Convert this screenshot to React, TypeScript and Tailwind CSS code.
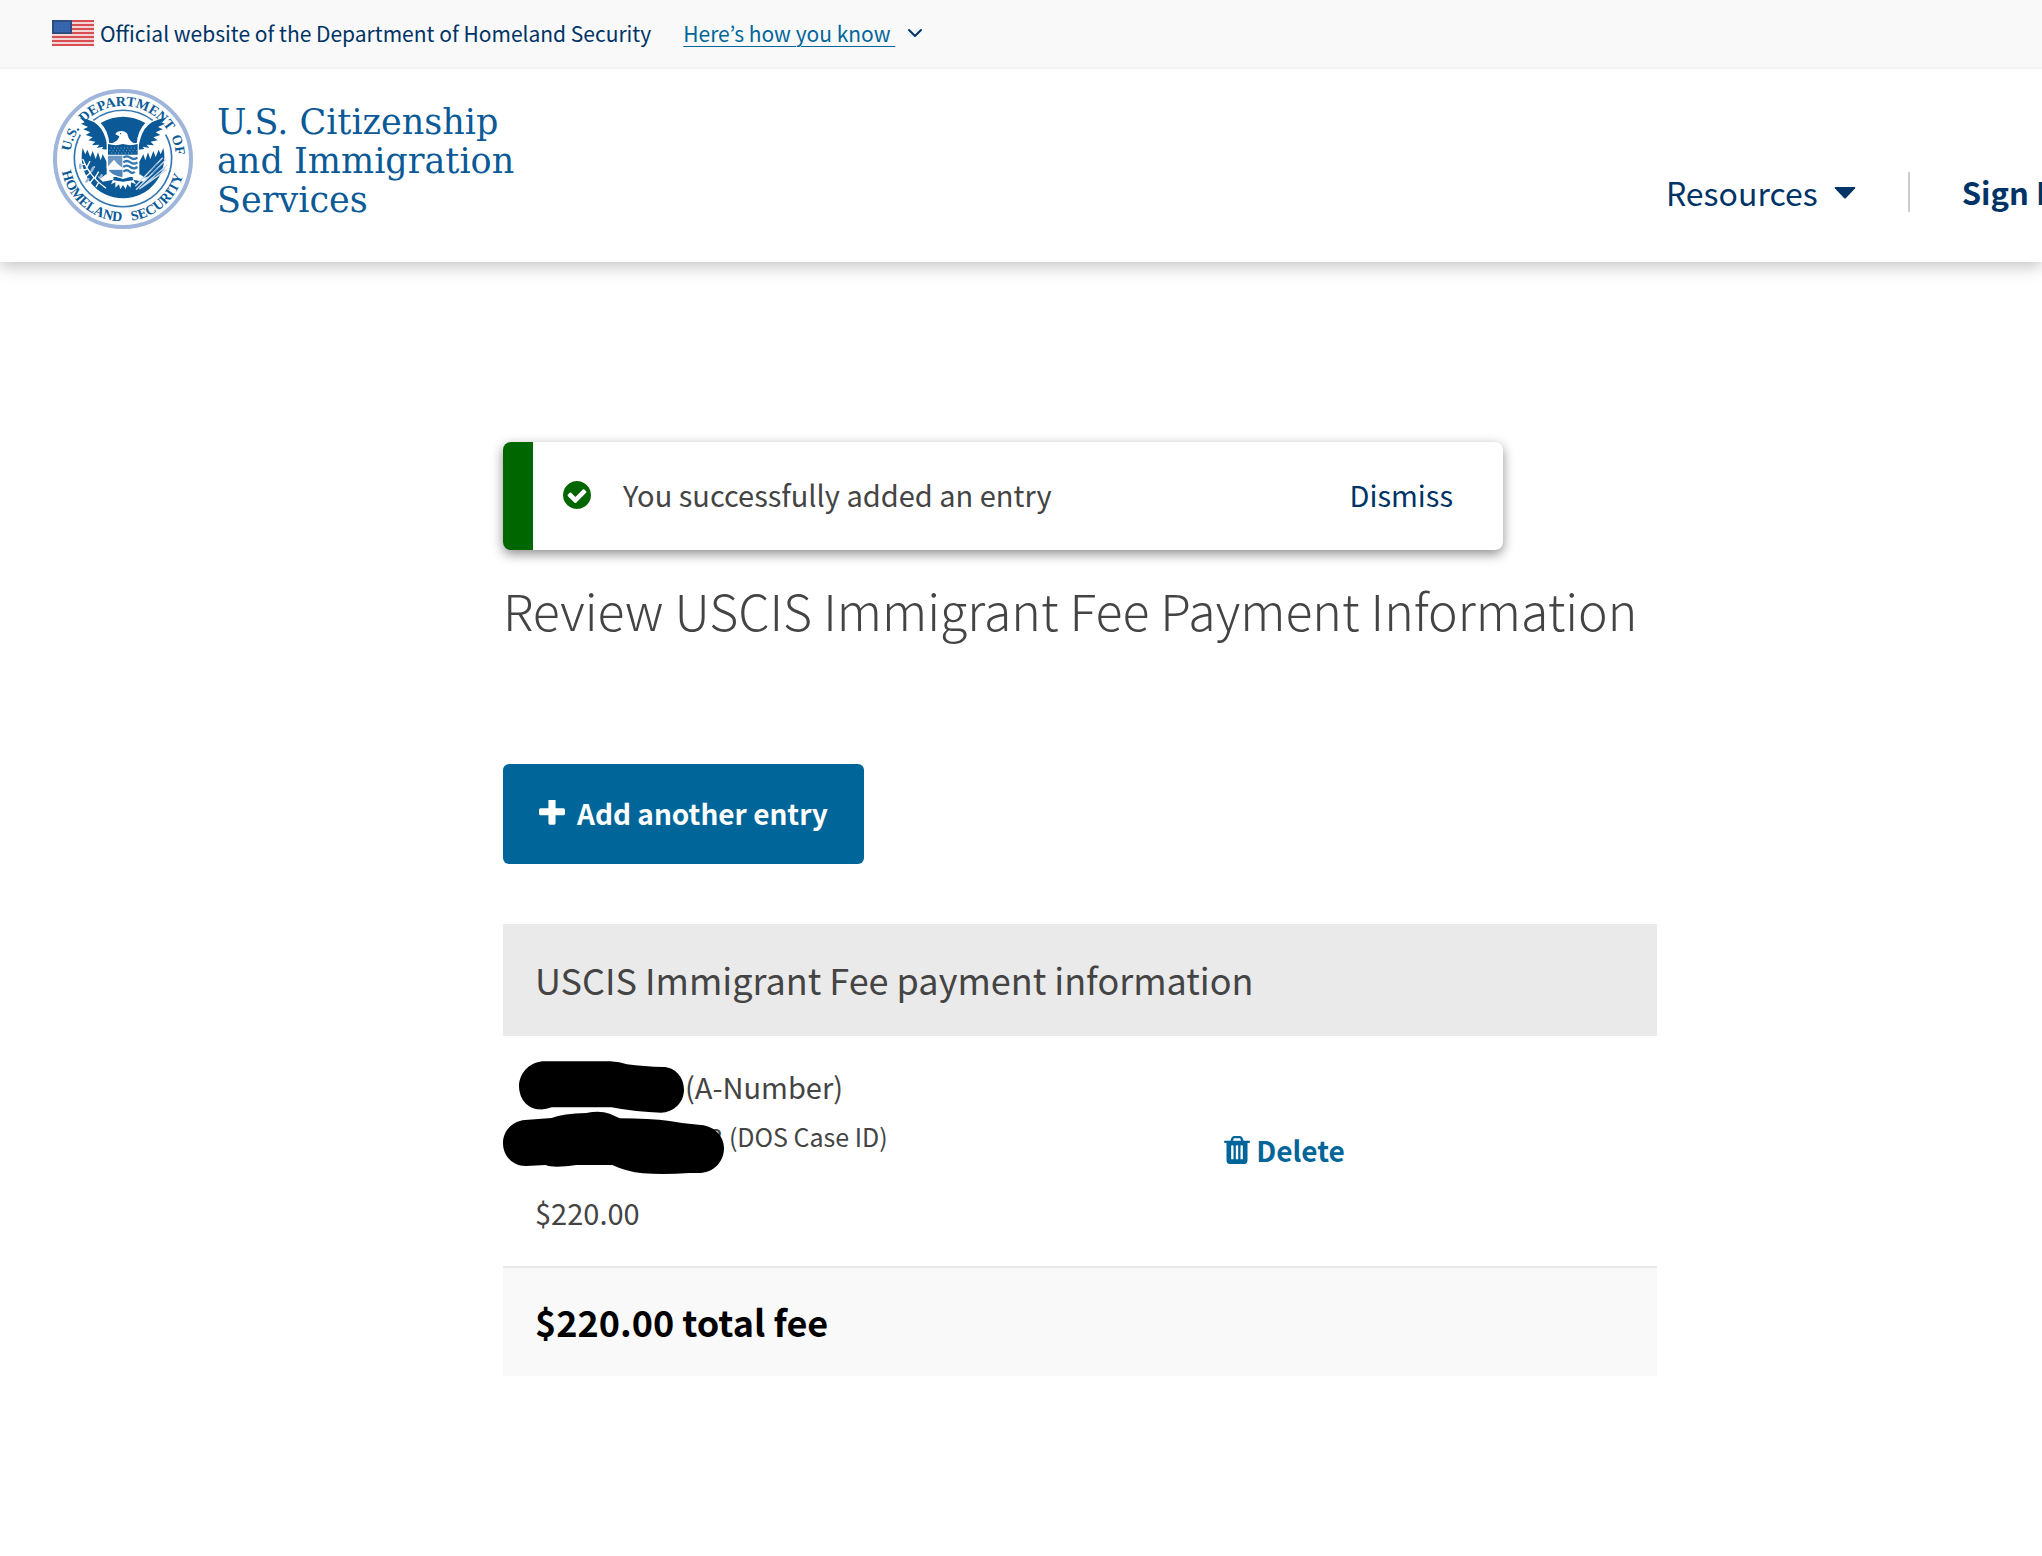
import { ChevronDown } from 'lucide-react';
import type { ReactNode } from 'react';

interface IconProps {
  className?: string;
}

interface FeeEntry {
  id: string;
  caseSuffix: string;
  amount: string;
}

const ENTRIES: FeeEntry[] = [{ id: 'entry-1', caseSuffix: '3', amount: '$220.00' }];

function PlusIcon({ className }: IconProps) {
  return (
    <svg className={className} viewBox="192 192 1408 1408" fill="currentColor" aria-hidden="true">
      <path d="M1600 736v192q0 40-28 68t-68 28h-416v416q0 40-28 68t-68 28h-192q-40 0-68-28t-28-68v-416h-416q-40 0-68-28t-28-68v-192q0-40 28-68t68-28h416v-416q0-40 28-68t68-28h192q40 0 68 28t28 68v416h416q40 0 68 28t28 68z" />
    </svg>
  );
}

function CheckCircleIcon({ className }: IconProps) {
  return (
    <svg className={className} viewBox="128 128 1536 1536" fill="currentColor" aria-hidden="true">
      <path d="M1412 734q0-28-18-46l-91-90q-19-19-45-19t-45 19l-408 407-226-226q-19-19-45-19t-45 19l-91 90q-18 18-18 46 0 27 18 45l362 362q19 19 45 19 27 0 46-19l543-543q18-18 18-45zm252 162q0 209-103 385.500t-279.500 279.500-385.500 103-385.500-103-279.500-279.500-103-385.500 103-385.500 279.500-279.500 385.500-103 385.500 103 279.500 279.500 103 385.500z" />
    </svg>
  );
}

function TrashIcon({ className }: IconProps) {
  return (
    <svg className={className} viewBox="192 128 1408 1536" fill="currentColor" aria-hidden="true">
      <path d="M704 1376v-704q0-14-9-23t-23-9h-64q-14 0-23 9t-9 23v704q0 14 9 23t23 9h64q14 0 23-9t9-23zm256 0v-704q0-14-9-23t-23-9h-64q-14 0-23 9t-9 23v704q0 14 9 23t23 9h64q14 0 23-9t9-23zm256 0v-704q0-14-9-23t-23-9h-64q-14 0-23 9t-9 23v704q0 14 9 23t23 9h64q14 0 23-9t9-23zm-544-992h448l-48-117q-7-9-17-11h-317q-10 2-17 11zm928 32v64q0 14-9 23t-23 9h-96v948q0 83-47 143.500t-113 60.500h-832q-66 0-113-58.500t-47-141.500v-952h-96q-14 0-23-9t-9-23v-64q0-14 9-23t23-9h309l70-167q15-37 54-63t79-26h320q40 0 79 26t54 63l70 167h309q14 0 23 9t9 23z" />
    </svg>
  );
}

function CaretIcon({ className }: IconProps) {
  return (
    <svg className={className} viewBox="0 0 22 12" fill="currentColor" aria-hidden="true">
      <path d="M1.500 0h19q1.500 0 .5 1.500L12 11q-1 1-2 0L1 1.500Q0 0 1.500 0z" />
    </svg>
  );
}

function FlagIcon({ className }: IconProps) {
  return (
    <svg className={className} viewBox="0 0 42 26" aria-hidden="true">
      <rect width="42" height="26" fill="#f3d5d5" />
      {[0, 4, 8, 12, 16, 20, 24].map((y) => (
        <rect key={y} y={y} width="42" height="2" fill="#d64f52" />
      ))}
      <rect width="20" height="14" fill="#2d4e80" />
      <rect x="2" y="2" width="16" height="10" fill="#3a66ad" />
      <path d="M3 4h14M4 7h13M3 10h14" stroke="#2a61b0" strokeDasharray="2 2" />
    </svg>
  );
}

/** Department seal: lettered ring around the eagle and shield */
function SealLogo({ className }: IconProps) {
  return (
    <svg className={className} viewBox="39 26 420 420" role="img" aria-label="Department of Homeland Security seal">
      <defs>
        <path id="seal-top" d="M90 236A159 159 0 0 1 408 236" />
        <path id="seal-bottom" d="M62 236A187 187 0 0 0 436 236" />
      </defs>
      <circle cx="249" cy="236" r="204" fill="#fff" stroke="#9fb5d9" strokeWidth="12" />

      {/* Inner ring, broken where the wings cross it */}
      <g fill="none" stroke="#3377b0" strokeWidth="5">
        <path d="M160 120A146 146 0 0 1 338 120" />
        <path d="M121 163A146 146 0 1 0 377 163" />
      </g>

      <g fill="#0b5a97" fontFamily="'Liberation Serif', serif" fontWeight="700" fontSize="42" textAnchor="middle">
        <text><textPath href="#seal-top" startOffset="12%">U.S.</textPath></text>
        <text><textPath href="#seal-top" startOffset="53%">DEPARTMENT</textPath></text>
        <text><textPath href="#seal-top" startOffset="92%">OF</textPath></text>
        <text><textPath href="#seal-bottom" startOffset="28%">HOMELAND</textPath></text>
        <text><textPath href="#seal-bottom" startOffset="73%">SECURITY</textPath></text>
      </g>

      {/* Field behind the eagle */}
      <g fill="#0b5a97">
        <path d="M182 128Q249 90 316 128Q292 152 290 192L208 192Q206 152 182 128Z" />
        <path d="M128 203L136 222L142 208L151 230L158 212L167 236L174 216L182 240L188 222L200 244L200 290L298 290L298 244L310 222L316 240L324 216L331 236L340 212L347 230L356 208L362 222L370 203A124 124 0 1 1 128 203Z" />
        {/* Wing feathers */}
        <path d="M119 112Q165 118 184 146Q200 172 203 208L185 206L190 199L170 203L178 193L156 195L166 184L145 180L158 171L137 164L151 156L130 147L144 140L123 130L135 126Z" />
        <path d="M379 112Q333 118 314 146Q298 172 295 208L313 206L308 199L328 203L320 193L342 195L332 184L353 180L340 171L361 164L347 156L368 147L354 140L375 130L363 126Z" />
      </g>

      {/* Head and neck */}
      <path d="M226 162Q230 152 245 152Q262 153 264 167Q266 180 284 190H214Q236 182 238 168Z" fill="#fff" />
      <circle cx="242" cy="160" r="2" fill="#0b5a97" />

      {/* Tail, legs and talons */}
      <path d="M198 282L222 292L213 312L226 306L226 322L237 312L241 327L249 314L257 327L262 312L272 322L273 306L288 312L277 292L300 282L314 292L326 288L312 304L284 299L249 304L216 299L188 304L172 288L184 292Z" fill="#fff" />

      {/* Olive branch */}
      <g stroke="#fff" strokeWidth="4" fill="none">
        <path d="M128 236Q148 288 198 324" />
        <path d="M136 252L120 252M142 266L124 272M150 278L134 292M162 292L150 308M176 306L168 320M140 262L150 242M150 278L164 258M164 294L176 274" />
      </g>
      <g fill="#9fb5d9">
        <ellipse cx="121" cy="258" rx="4" ry="9" />
        <ellipse cx="157" cy="267" rx="4" ry="9" transform="rotate(25 157 267)" />
        <ellipse cx="142" cy="300" rx="4" ry="9" transform="rotate(40 142 300)" />
        <ellipse cx="183" cy="288" rx="4" ry="8" transform="rotate(30 183 288)" />
      </g>

      {/* Arrows */}
      <g stroke="#cfdced" strokeWidth="4">
        <path d="M288 328L378 238M286 318L368 232M298 326L382 254M304 322L380 268" />
      </g>
      <path d="M332 268L352 250M338 278L366 254M344 288L374 266" stroke="#3377b0" strokeWidth="2" />

      {/* Shield */}
      <path d="M200 188H296V262Q290 288 249 296Q208 288 200 262Z" fill="#fff" />
      <path d="M204 191Q226 198 249 191Q272 198 293 191V223H204Z" fill="#0b5a97" />
      <path d="M212 203H288M208 211H290M214 218H286" stroke="#8fb0d3" strokeWidth="3" strokeDasharray="3 7" />
      <path d="M204 226H247V290Q210 284 204 262Z" fill="#6c98c6" />
      <path d="M204 258L222 238L232 250L247 262V268H204Z" fill="#fff" />
      <path d="M206 270H247V290Q214 284 206 270Z" fill="#4d85bb" />
      <path d="M250 232q10-8 21 0t21 0M250 246q10-8 21 0t21 0M250 260q10-8 21 0t21 0M250 274q10-8 19 0t15 0" fill="none" stroke="#3377b0" strokeWidth="7" />
    </svg>
  );
}

/** Black marker strokes covering the identifiers */
function Redaction({ className }: IconProps) {
  return (
    <svg className={className} viewBox="0 0 666 342" aria-hidden="true">
      <path d="M126 1H322Q350 2 372 10Q420 17 484 18C516 20 543 48 543 86C543 124 512 154 474 155Q400 154 326 139H146Q128 146 110 145C70 143 48 110 48 74C50 32 84 1 126 1Z" />
      <path d="M66 177L146 171Q180 158 250 156Q290 148 320 158L350 172Q440 172 500 180Q540 188 586 191C630 192 663 222 663 261C663 305 630 336 586 336H560Q480 342 420 337Q370 332 328 312H220Q150 322 128 312L70 315C30 316 0 286 0 246C0 210 28 180 66 177Z" />
    </svg>
  );
}

function GovBanner() {
  return (
    <div className="relative z-10 flex h-[69px] items-center border-b-2 border-[#f4f4f4] bg-[#f9f9f9] px-[52px] pb-0.5 text-[21px] leading-8 text-[#003366]">
      <FlagIcon className="mr-1.5 h-[26px] w-[42px] shrink-0" />
      <span>Official website of the Department of Homeland Security</span>
      <a href="#how" className="ml-8 whitespace-pre text-[#00669a] underline decoration-1 underline-offset-4">
        {'Here’s how you know '}
      </a>
      <ChevronDown className="ml-2 size-6" strokeWidth={2} />
    </div>
  );
}

function SiteHeader() {
  return (
    <header className="flex h-[193px] justify-between pl-[53px] shadow-[0_4px_16px_rgba(0,0,0,0.25)]">
      <a href="#home" className="mt-5 flex h-[140px] shrink-0">
        <SealLogo className="size-[140px]" />
        <span className="ml-6 mt-3.5 font-['DejaVu_Serif',serif] text-[35px] leading-[39px] text-[#0b5a97]">
          U.S. Citizenship
          <br />
          and Immigration
          <br />
          Services
        </span>
      </a>
      <nav className="-mr-6 mt-[103px] flex h-10 shrink-0 items-center text-[32px] leading-10 text-[#003366]">
        <button type="button" className="flex items-center gap-4">
          Resources
          <CaretIcon className="mt-0.5 h-3 w-[22px]" />
        </button>
        <span className="ml-[52px] mr-[52px] h-10 w-0.5 bg-[#cccccc]" />
        <a href="#sign-in" className="whitespace-nowrap text-[31px] font-bold">
          Sign In
        </a>
      </nav>
    </header>
  );
}

function SuccessAlert({ children }: { children: ReactNode }) {
  return (
    <div
      role="status"
      className="flex h-[108px] max-w-[1000px] items-center rounded-lg border-l-[30px] border-[#006600] bg-white pb-0.5 pl-[30px] pr-[50px] text-[29px] leading-10 text-[#444444] shadow-[0_4px_12px_rgba(0,0,0,0.45)]"
    >
      <CheckCircleIcon className="size-7 text-[#006600]" />
      <p className="ml-8 flex-1 pb-0.5">{children}</p>
      <button type="button" className="pb-0.5 text-[#003366]">
        Dismiss
      </button>
    </div>
  );
}

function EntryRow({ entry }: { entry: FeeEntry }) {
  return (
    <tr className="h-[231px] align-top">
      <td className="relative w-5/8 pt-[30px]">
        <p className="pl-[182px] text-[29px] leading-10">(A-Number)</p>
        <p className="mt-2.5 flex gap-1.5 pl-[206px] text-[25px] leading-10">
          <span>{entry.caseSuffix}</span>
          <span>(DOS Case ID)</span>
        </p>
        <p className="mt-9 pl-8 text-[29px] leading-10">{entry.amount}</p>
        <Redaction className="absolute left-0 top-[25px] h-[114px] w-[222px] text-black" />
      </td>
      <td className="pt-[94px]">
        <button type="button" className="flex items-center gap-1.5 text-[28px] font-bold leading-10 text-[#00669a]">
          <TrashIcon className="h-7 w-[26px]" />
          Delete
        </button>
      </td>
    </tr>
  );
}

export default function App() {
  return (
    <div className="min-h-screen overflow-hidden bg-white font-['Noto_Sans_CJK_KR','Open_Sans',sans-serif] text-[#444444]">
      <GovBanner />
      <SiteHeader />
      <main className="grid grid-cols-[503fr_1154fr_385fr] pb-[180px] pt-[180px]">
        <div className="col-start-2">
          <SuccessAlert>You successfully added an entry</SuccessAlert>
          <h1 className="mt-6 whitespace-nowrap text-[50px] font-light leading-[70px]">
            Review USCIS Immigrant Fee Payment Information
          </h1>

          <button
            type="button"
            className="mt-[120px] flex h-[100px] items-center gap-3 rounded-md bg-[#00669a] px-9 pb-0.5 text-[28px] font-bold leading-10 text-white"
          >
            <PlusIcon className="size-[26px]" />
            Add another entry
          </button>

          <table className="mt-[60px] w-full border-collapse text-left">
            <thead>
              <tr className="h-[112px] bg-[#eaeaea]">
                <th colSpan={2} scope="colgroup" className="pb-0.5 pl-8 text-[36px] font-normal leading-[48px]">
                  USCIS Immigrant Fee payment information
                </th>
              </tr>
            </thead>
            <tbody>
              {ENTRIES.map((entry) => (
                <EntryRow key={entry.id} entry={entry} />
              ))}
            </tbody>
            <tfoot>
              <tr className="h-[109px] border-t-2 border-[#e9e9e9] bg-[#f9f9f9]">
                <td colSpan={2} className="pb-0.5 pl-8 text-[36px] font-bold leading-[48px] text-black">
                  $220.00 total fee
                </td>
              </tr>
            </tfoot>
          </table>
        </div>
      </main>
    </div>
  );
}
